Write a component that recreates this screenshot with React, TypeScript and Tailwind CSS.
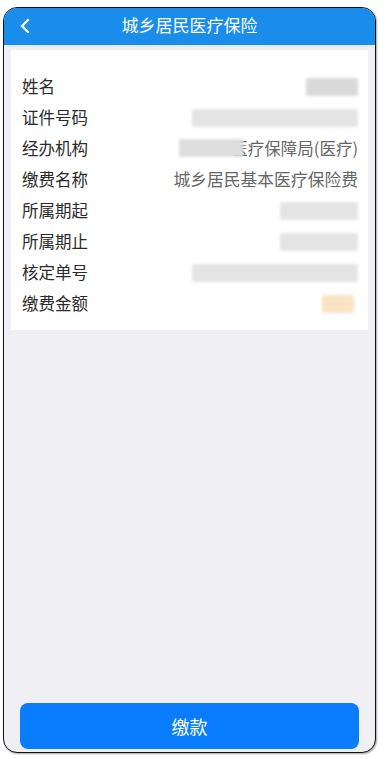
const font = { fontFamily: '"Noto Sans CJK SC", "Noto Sans", sans-serif' };

function Blur({ w, tone = "gray" }: { w: string; tone?: "gray" | "light" | "orange" }) {
  const cls =
    tone === "orange"
      ? "bg-[#fbe3c6]"
      : tone === "light"
      ? "bg-[#e4e4e4]"
      : "bg-[#d9d9d9]";
  return <div className={`${w} h-[18px] ${cls} blur-[1.5px] rounded-[2px]`} />;
}

function Row({ label, children }: { label: string; children: React.ReactNode }) {
  return (
    <div className="h-[31px] flex items-center justify-between">
      <span className="text-[16.5px] text-[#2a2a2a]">{label}</span>
      <div className="flex items-center">{children}</div>
    </div>
  );
}

export default function App() {
  return (
    <div className="w-[390px] h-[759px] bg-white pt-[7px] pl-[3px]" style={font}>
      <div className="w-[373px] h-[746px] border-[1.5px] border-[#111] rounded-[14px] overflow-hidden bg-[#efeff4] flex flex-col shadow-[1px_1px_2px_rgba(0,0,0,0.35)]">
        {/* 顶部栏 */}
        <div className="h-[37px] bg-[#1a8ce9] flex items-center relative">
          <svg className="absolute left-[15px] top-[10px]" width="12" height="16" viewBox="0 0 12 16">
            <path d="M9 2 L3 8 L9 14" stroke="white" strokeWidth="2.4" fill="none" strokeLinecap="round" strokeLinejoin="round" />
          </svg>
          <div className="flex-1 text-center text-white text-[17px] pb-[3px]">城乡居民医疗保险</div>
        </div>
        <div className="h-[2px] bg-[#e4ebf3]" />

        {/* 信息卡片 */}
        <div className="mx-[7px] mt-[3px] bg-white pl-[11px] pr-[10px] pt-[21px] pb-[11px]">
          <Row label="姓名">
            <Blur w="w-[52px]" />
          </Row>
          <Row label="证件号码">
            <Blur w="w-[166px]" tone="light" />
          </Row>
          <Row label="经办机构">
            <div className="relative">
              <span className="text-[16.5px] text-[#666] pl-[52px]">医疗保障局(医疗)</span>
              <div className="absolute left-0 top-[3px] w-[64px] h-[18px] bg-[#dedede] blur-[1.5px]" />
            </div>
          </Row>
          <Row label="缴费名称">
            <span className="text-[16.8px] text-[#666]">城乡居民基本医疗保险费</span>
          </Row>
          <Row label="所属期起">
            <Blur w="w-[78px]" tone="light" />
          </Row>
          <Row label="所属期止">
            <Blur w="w-[78px]" tone="light" />
          </Row>
          <Row label="核定单号">
            <Blur w="w-[166px]" tone="light" />
          </Row>
          <Row label="缴费金额">
            <div className="mr-[4px]">
              <Blur w="w-[32px]" tone="orange" />
            </div>
          </Row>
        </div>

        <div className="flex-1" />

        {/* 缴款按钮 */}
        <div className="px-[16px] pb-[3px]">
          <button className="w-full h-[46px] rounded-[8px] bg-[#0a7cfe] text-white text-[18px]">缴款</button>
        </div>
      </div>
    </div>
  );
}
